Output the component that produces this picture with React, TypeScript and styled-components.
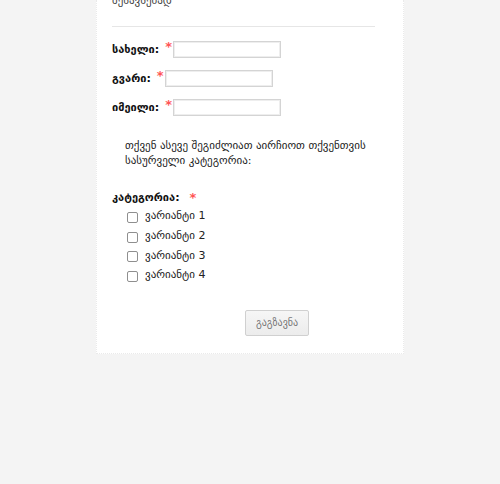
import React from "react";
import styled, { createGlobalStyle } from "styled-components";

const Global = createGlobalStyle`
  html, body { margin: 0; padding: 0; background: #f4f4f4; }
  body { font-family: "DejaVu Sans", "Noto Sans", sans-serif; color: #222; }
`;

const Page = styled.div`
  display: flex;
  justify-content: center;
  width: 500px;
  height: 484px;
  overflow: hidden;
`;

const Card = styled.form`
  box-sizing: border-box;
  width: 308px;
  height: 354px;
  background: #fff;
  border: 1px dotted #eaeaea;
  border-top: none;
  padding: 0 28px 0 15px;
  display: flex;
  flex-direction: column;
  overflow: hidden;
`;

const Intro = styled.div`
  font-size: 11px;
  color: #444;
  margin-top: -6px;
  line-height: 14px;
`;

const Divider = styled.hr`
  border: none;
  border-top: 1px solid #e6e6e6;
  margin: 18px 0 13px 0;
`;

const Row = styled.div`
  display: flex;
  align-items: center;
  height: 18px;
  margin-bottom: 11px;
`;

const Label = styled.label`
  font-size: 11px;
  font-weight: bold;
  color: #111;
`;

const Star = styled.span<{ $gap?: number }>`
  color: #f55;
  font-size: 13px;
  font-weight: bold;
  line-height: 13px;
  margin-left: ${(p) => p.$gap ?? 5}px;
  margin-right: 1px;
  align-self: flex-start;
`;

const Input = styled.input`
  box-sizing: border-box;
  width: 108px;
  height: 17px;
  border: 1px solid #d4d4d4;
  box-shadow: inset 0 0 0 1px #eee;
  padding: 0 3px;
  outline: none;
`;

const Para = styled.p`
  margin: 11px 0 0 13px;
  font-size: 11px;
  line-height: 15px;
  color: #222;
`;

const CatLabel = styled.div`
  display: flex;
  align-items: flex-start;
  margin-top: 23px;
  height: 16px;
`;

const Options = styled.div`
  display: flex;
  flex-direction: column;
  margin-top: -1px;
  padding-left: 15px;
`;

const Option = styled.label`
  display: flex;
  align-items: center;
  height: 19.7px;
  font-size: 11px;
  color: #222;
`;

const Box = styled.span`
  box-sizing: border-box;
  width: 11px;
  height: 11px;
  border: 1px solid #8f8f8f;
  border-radius: 2px;
  background: #fff;
  margin-right: 7px;
  margin-top: 3px;
`;

const Footer = styled.div`
  display: flex;
  justify-content: flex-start;
  padding-left: 133px;
  margin-top: 25px;
`;

const Button = styled.button`
  box-sizing: border-box;
  width: 64px;
  height: 26px;
  border: 1px solid #d0d0d0;
  border-radius: 2px;
  background: linear-gradient(#f6f6f6, #ececec);
  color: #777;
  font-family: "DejaVu Sans", sans-serif;
  font-size: 10px;
  padding: 0;
`;

const fields = [
  { label: "სახელი:", gap: 6 },
  { label: "გვარი:", gap: 6 },
  { label: "იმეილი:", gap: 6 },
];

export default function App() {
  return (
    <Page>
      <Global />
      <Card>
        <Intro>შესავსებად</Intro>
        <Divider />
        {fields.map((f) => (
          <Row key={f.label}>
            <Label>{f.label}</Label>
            <Star $gap={f.gap}>*</Star>
            <Input type="text" />
          </Row>
        ))}
        <Para>
          თქვენ ასევე შეგიძლიათ აირჩიოთ თქვენთვის
          <br />
          სასურველი კატეგორია:
        </Para>
        <CatLabel>
          <Label>კატეგორია:</Label>
          <Star $gap={10}>*</Star>
        </CatLabel>
        <Options>
          {[1, 2, 3, 4].map((n) => (
            <Option key={n}>
              <Box />
              ვარიანტი {n}
            </Option>
          ))}
        </Options>
        <Footer>
          <Button type="button">გაგზავნა</Button>
        </Footer>
      </Card>
    </Page>
  );
}
